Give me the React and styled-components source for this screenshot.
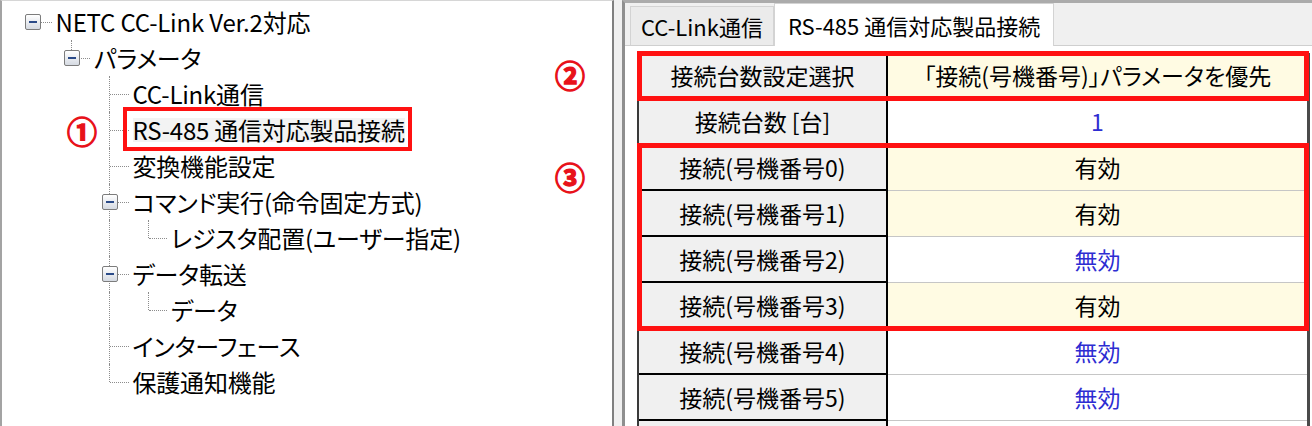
import React from 'react';
import styled, { createGlobalStyle } from 'styled-components';

const GlobalStyle = createGlobalStyle`
  html, body {
    margin: 0;
    padding: 0;
    background: #f0f0f0;
  }
  body {
    font-family: "Noto Sans CJK JP", "Noto Sans", sans-serif;
    font-feature-settings: "palt" 1;
    color: #000;
  }
`;

const Screen = styled.div`
  display: flex;
  width: 1312px;
  height: 426px;
  overflow: hidden;
  background: #f0f0f0;
`;

/* ---------- tree pane ---------- */

const TreePane = styled.div`
  position: relative;
  box-sizing: border-box;
  flex-shrink: 0;
  width: 614px;
  padding-top: 3px;
  background: #fff;
  border-left: 2px solid #a3a3a3;
  border-right: 2px solid #808080;
  border-top: 1px solid #d6d6d6;
`;

const TreeRow = styled.div`
  display: flex;
  align-items: center;
  height: 36px;
  padding-left: 11px;
`;

const Guide = styled.span`
  position: relative;
  flex-shrink: 0;
  width: 38.5px;
  height: 100%;

  &::before {
    content: '';
    display: ${p => (p.$down || p.$up ? 'block' : 'none')};
    position: absolute;
    left: 19px;
    top: 0;
    bottom: ${p => (p.$down ? '0' : '50%')};
    border-left: 1px dotted #8c8c8c;
  }

  &::after {
    content: '';
    display: ${p => (p.$branch ? 'block' : 'none')};
    position: absolute;
    left: 20px;
    right: 0;
    top: 50%;
    border-top: 1px dotted #8c8c8c;
  }
`;

const ExpandBox = styled.span`
  position: absolute;
  z-index: 1;
  left: 12px;
  top: 50%;
  width: 16px;
  height: 16px;
  margin-top: -8px;
  box-sizing: border-box;
  border: 1px solid #7c7c7c;
  border-radius: 2px;
  background: linear-gradient(#ffffff, #d5dae2);

  &::after {
    content: '';
    position: absolute;
    left: 3px;
    right: 3px;
    top: 6px;
    height: 2px;
    background: #2a4a88;
  }
`;

const TreeLabel = styled.span`
  position: relative;
  margin-left: 4px;
  font-size: 24px;
  line-height: 1;
  white-space: nowrap;
  letter-spacing: -0.2px;
  background: ${p => (p.$marked ? '#f3f3f3' : 'transparent')};

  &::after {
    content: '';
    display: ${p => (p.$marked ? 'block' : 'none')};
    position: absolute;
    left: -10px;
    right: -7px;
    top: -11px;
    bottom: -9px;
    border: 4px solid #ff1111;
  }
`;

const Callout = styled.span`
  position: absolute;
  left: ${p => p.$x}px;
  top: ${p => p.$y}px;
  color: #e8121a;
  font-size: 30px;
  font-weight: 700;
  line-height: 1;
  -webkit-text-stroke: 1.3px #e8121a;
`;

/* ---------- settings pane ---------- */

const SettingsPane = styled.div`
  display: flex;
  flex-direction: column;
  flex: 1;
  min-width: 0;
  margin-left: 8px;
  background: #fff;
  border-left: 3px solid #8f8f8f;
  border-top: 3px solid #ababab;
`;

const TabStrip = styled.div`
  display: flex;
  align-items: flex-end;
  box-sizing: border-box;
  height: 43px;
  padding-left: 5px;
  background: #f0f0f0;
  border-bottom: 1px solid #cfcfcf;
`;

const Tab = styled.div`
  display: flex;
  align-items: center;
  box-sizing: border-box;
  height: ${p => (p.$active ? '43px' : '39px')};
  margin-bottom: ${p => (p.$active ? '-1px' : '0')};
  padding: 0 ${p => (p.$active ? '13px' : '10px')};
  background: ${p => (p.$active ? '#fff' : '#ebebeb')};
  border: 1px solid #d3d3d3;
  border-bottom: none;
  font-size: 22px;
  line-height: 1;
  white-space: nowrap;
`;

const TabPage = styled.div`
  flex: 1;
  overflow: hidden;
  padding: 7px 0 0 12px;
  background: #fff;
`;

const Grid = styled.div`
  box-sizing: border-box;
  width: 673px;
  border-left: 2px solid #3a3a3a;
  border-right: 3px solid #4a4a4a;
`;

const Group = styled.div`
  position: relative;
  z-index: ${p => (p.$marked ? 1 : 0)};
  outline: ${p => (p.$marked ? '5px solid #ff1111' : 'none')};
  outline-offset: -3px;
`;

const Row = styled.div`
  display: grid;
  grid-template-columns: 249px 1fr;
  height: 46px;
`;

const HeadCell = styled.div`
  display: flex;
  align-items: center;
  justify-content: center;
  box-sizing: border-box;
  background: #f0f0f0;
  border-right: 2px solid #000;
  border-bottom: 2px solid #000;
  font-size: 23px;
  line-height: 1;
  white-space: nowrap;
`;

const ValueCell = styled.div`
  display: flex;
  align-items: center;
  justify-content: center;
  box-sizing: border-box;
  background: ${p => (p.$changed ? '#fffbe3' : '#fff')};
  border-bottom: 1px solid #c6c6c6;
  color: ${p => (p.$dim ? '#2d2dd2' : '#000')};
  font-size: 23px;
  line-height: 1;
  white-space: nowrap;
`;

const tree = [
  { label: 'NETC CC-Link Ver.2対応', guides: [{ box: true, branch: true }] },
  { label: 'パラメータ', guides: [{}, { up: true, box: true, branch: true }] },
  { label: 'CC-Link通信', guides: [{}, {}, { down: true, branch: true }] },
  { label: 'RS-485 通信対応製品接続', guides: [{}, {}, { down: true, branch: true }], marked: true },
  { label: '変換機能設定', guides: [{}, {}, { down: true, branch: true }] },
  { label: 'コマンド実行(命令固定方式)', guides: [{}, {}, { down: true, box: true, branch: true }] },
  { label: 'レジスタ配置(ユーザー指定)', guides: [{}, {}, { down: true }, { up: true, branch: true }] },
  { label: 'データ転送', guides: [{}, {}, { down: true, box: true, branch: true }] },
  { label: 'データ', guides: [{}, {}, { down: true }, { up: true, branch: true }] },
  { label: 'インターフェース', guides: [{}, {}, { down: true, branch: true }] },
  { label: '保護通知機能', guides: [{}, {}, { up: true, branch: true }] },
];

const unit = n => `接続(号機番号${n})`;

// the last row is only peeking in at the bottom edge, so it carries no text
const groups = [
  { marked: true, rows: [{ id: 'sel', name: '接続台数設定選択', value: '「接続(号機番号)」パラメータを優先', changed: true }] },
  { rows: [{ id: 'cnt', name: '接続台数 [台]', value: '1', dim: true }] },
  {
    marked: true,
    rows: [
      { id: 'u0', name: unit(0), value: '有効', changed: true },
      { id: 'u1', name: unit(1), value: '有効', changed: true },
      { id: 'u2', name: unit(2), value: '無効', dim: true },
      { id: 'u3', name: unit(3), value: '有効', changed: true },
    ],
  },
  {
    rows: [
      { id: 'u4', name: unit(4), value: '無効', dim: true },
      { id: 'u5', name: unit(5), value: '無効', dim: true },
      { id: 'u6', name: '', value: '' },
    ],
  },
];

const App = () => (
  <Screen>
    <GlobalStyle />
    <TreePane>
      {tree.map(node => (
        <TreeRow key={node.label}>
          {node.guides.map((g, i) => (
            <Guide key={i} $down={g.down} $up={g.up} $branch={g.branch}>
              {g.box ? <ExpandBox /> : null}
            </Guide>
          ))}
          <TreeLabel $marked={node.marked}>{node.label}</TreeLabel>
        </TreeRow>
      ))}
      <Callout $x={65} $y={114}>①</Callout>
      <Callout $x={553} $y={58}>②</Callout>
      <Callout $x={553} $y={160}>③</Callout>
    </TreePane>

    <SettingsPane>
      <TabStrip>
        <Tab>CC-Link通信</Tab>
        <Tab $active>RS-485 通信対応製品接続</Tab>
      </TabStrip>
      <TabPage>
        <Grid>
          {groups.map((grp, gi) => (
            <Group key={gi} $marked={grp.marked}>
              {grp.rows.map(r => (
                <Row key={r.id}>
                  <HeadCell>{r.name}</HeadCell>
                  <ValueCell $changed={r.changed} $dim={r.dim}>{r.value}</ValueCell>
                </Row>
              ))}
            </Group>
          ))}
        </Grid>
      </TabPage>
    </SettingsPane>
  </Screen>
);

export default App;
